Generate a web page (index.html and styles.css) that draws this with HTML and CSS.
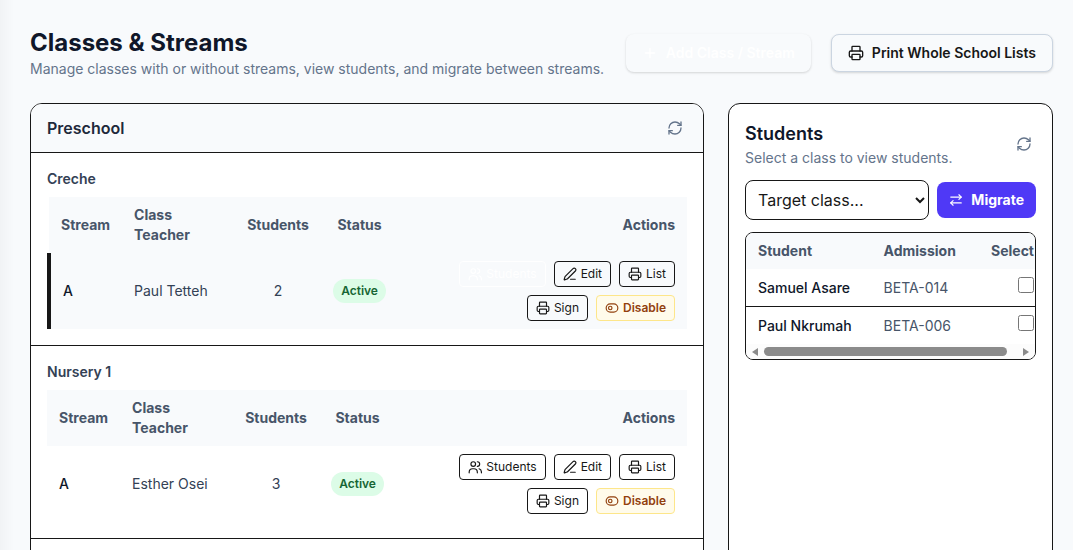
FILE: index.html
```html
<!DOCTYPE html>
<html lang="en">
<head>
<meta charset="utf-8">
<meta name="viewport" content="width=device-width, initial-scale=1">
<title>Classes &amp; Streams</title>
<link rel="stylesheet" href="styles.css">
</head>
<body>
<!-- shared icons -->
<svg class="sprite" aria-hidden="true">
  <symbol id="i-plus" viewBox="0 0 24 24"><path d="M5 12h14M12 5v14"/></symbol>
  <symbol id="i-printer" viewBox="0 0 24 24"><path d="M6 18H4a2 2 0 0 1-2-2v-5a2 2 0 0 1 2-2h16a2 2 0 0 1 2 2v5a2 2 0 0 1-2 2h-2"/><path d="M6 9V3a1 1 0 0 1 1-1h10a1 1 0 0 1 1 1v6"/><rect x="6" y="14" width="12" height="8" rx="1"/></symbol>
  <symbol id="i-refresh" viewBox="0 0 24 24"><path d="M3 12a9 9 0 0 1 9-9 9.75 9.75 0 0 1 6.74 2.74L21 8"/><path d="M21 3v5h-5"/><path d="M21 12a9 9 0 0 1-9 9 9.75 9.75 0 0 1-6.74-2.74L3 16"/><path d="M8 16H3v5"/></symbol>
  <symbol id="i-users" viewBox="0 0 24 24"><path d="M2 22v-1a6 6 0 0 1 6-6h2a6 6 0 0 1 6 6v1"/><circle cx="9" cy="7" r="4"/><path d="M16 3a4 4 0 0 1 0 8"/><path d="M19 15a6 6 0 0 1 4 6v1"/></symbol>
  <symbol id="i-pen" viewBox="0 0 24 24"><path d="M13 21h8"/><path d="M21.174 6.812a1 1 0 0 0-3.986-3.987L3.842 16.174a2 2 0 0 0-.5.83l-1.321 4.352a.5.5 0 0 0 .623.622l4.353-1.32a2 2 0 0 0 .83-.497z"/></symbol>
  <symbol id="i-toggle" viewBox="0 0 24 24"><circle cx="9" cy="12" r="3"/><rect x="2" y="5" width="20" height="14" rx="7"/></symbol>
  <symbol id="i-swap" viewBox="0 0 24 24"><path d="m17 3 4 4-4 4"/><path d="M21 7H3"/><path d="m7 21-4-4 4-4"/><path d="M3 17h18"/></symbol>
</svg>

<main class="page">
  <header class="page-head">
    <div class="page-title">
      <h1>Classes &amp; Streams</h1>
      <p>Manage classes with or without streams, view students, and migrate between streams.</p>
    </div>
    <div class="head-actions">
      <button type="button" class="btn btn-add"><svg class="icon"><use href="#i-plus"/></svg>Add Class / Stream</button>
      <button type="button" class="btn btn-print"><svg class="icon"><use href="#i-printer"/></svg>Print Whole School Lists</button>
    </div>
  </header>

  <div class="layout">
    <section class="card classes">
      <div class="card-head">
        <h2>Preschool</h2>
        <button type="button" class="refresh" aria-label="Refresh classes"><svg class="icon"><use href="#i-refresh"/></svg></button>
      </div>

      <div class="class-block">
        <h3>Creche</h3>
        <table class="streams">
          <thead>
            <tr><th class="col-stream">Stream</th><th class="col-teacher">Class Teacher</th><th class="col-count center">Students</th><th class="col-status center">Status</th><th class="right">Actions</th></tr>
          </thead>
          <tbody>
            <tr class="selected">
              <td class="name">A</td>
              <td>Paul Tetteh</td>
              <td class="center">2</td>
              <td class="center"><span class="badge">Active</span></td>
              <td>
                <div class="actions">
                  <button type="button" class="btn-sm active"><svg class="icon"><use href="#i-users"/></svg>Students</button>
                  <button type="button" class="btn-sm"><svg class="icon"><use href="#i-pen"/></svg>Edit</button>
                  <button type="button" class="btn-sm"><svg class="icon"><use href="#i-printer"/></svg>List</button>
                  <button type="button" class="btn-sm"><svg class="icon"><use href="#i-printer"/></svg>Sign</button>
                  <button type="button" class="btn-sm warn"><svg class="icon"><use href="#i-toggle"/></svg>Disable</button>
                </div>
              </td>
            </tr>
          </tbody>
        </table>
      </div>

      <div class="class-block">
        <h3>Nursery 1</h3>
        <table class="streams">
          <thead>
            <tr><th class="col-stream">Stream</th><th class="col-teacher">Class Teacher</th><th class="col-count center">Students</th><th class="col-status center">Status</th><th class="right">Actions</th></tr>
          </thead>
          <tbody>
            <tr>
              <td class="name">A</td>
              <td>Esther Osei</td>
              <td class="center">3</td>
              <td class="center"><span class="badge">Active</span></td>
              <td>
                <div class="actions">
                  <button type="button" class="btn-sm"><svg class="icon"><use href="#i-users"/></svg>Students</button>
                  <button type="button" class="btn-sm"><svg class="icon"><use href="#i-pen"/></svg>Edit</button>
                  <button type="button" class="btn-sm"><svg class="icon"><use href="#i-printer"/></svg>List</button>
                  <button type="button" class="btn-sm"><svg class="icon"><use href="#i-printer"/></svg>Sign</button>
                  <button type="button" class="btn-sm warn"><svg class="icon"><use href="#i-toggle"/></svg>Disable</button>
                </div>
              </td>
            </tr>
          </tbody>
        </table>
      </div>

      <div class="class-block"></div>
    </section>

    <aside class="card students">
      <div class="students-head">
        <div>
          <h2>Students</h2>
          <p>Select a class to view students.</p>
        </div>
        <button type="button" class="refresh" aria-label="Refresh students"><svg class="icon"><use href="#i-refresh"/></svg></button>
      </div>
      <div class="migrate">
        <select aria-label="Target class">
          <option>Target class...</option>
        </select>
        <button type="button" class="btn-migrate"><svg class="icon"><use href="#i-swap"/></svg>Migrate</button>
      </div>
      <div class="table-box">
        <div class="table-scroll">
          <table class="roster">
            <thead>
              <tr><th>Student</th><th>Admission</th><th class="right">Select</th></tr>
            </thead>
            <tbody>
              <tr>
                <td class="name">Samuel Asare</td>
                <td>BETA-014</td>
                <td class="right"><input type="checkbox" aria-label="Select Samuel Asare"></td>
              </tr>
              <tr>
                <td class="name">Paul Nkrumah</td>
                <td>BETA-006</td>
                <td class="right"><input type="checkbox" aria-label="Select Paul Nkrumah"></td>
              </tr>
            </tbody>
          </table>
        </div>
        <div class="scrollbar" aria-hidden="true">
          <svg class="arrow" viewBox="0 0 6 8"><path d="M6 0v8L0 4z"/></svg>
          <div class="track"><div class="thumb"></div></div>
          <svg class="arrow" viewBox="0 0 6 8"><path d="M0 0v8l6-4z"/></svg>
        </div>
      </div>
    </aside>
  </div>
</main>
</body>
</html>
```
FILE: styles.css
```css
* {
  box-sizing: border-box;
  margin: 0;
  padding: 0;
}
body {
  font-family: Inter, "Liberation Sans", sans-serif;
  font-size: 14px;
  line-height: 20px;
  color: #171717;
  background: linear-gradient(to right, #f1f3f5, #f8fafc 14px);
}
button, select, input {
  font: inherit;
  color: inherit;
}
button {
  cursor: pointer;
}
.sprite {
  display: none;
}
.icon {
  width: 16px;
  height: 16px;
  flex: none;
  fill: none;
  stroke: currentColor;
  stroke-width: 2;
  stroke-linecap: round;
  stroke-linejoin: round;
}
.right {
  text-align: right;
}
.center {
  text-align: center;
}

.page {
  padding: 27px 20px 24px 30px;
}
.page-head {
  display: flex;
  align-items: center;
  justify-content: space-between;
  margin-bottom: 24px;
}
.page-title h1 {
  font-size: 24px;
  line-height: 32px;
  font-weight: 700;
  color: #0f172a;
}
.page-title p {
  color: #64748b;
}
.head-actions {
  display: flex;
  gap: 20px;
}
.btn {
  display: flex;
  align-items: center;
  gap: 8px;
  padding: 8px 16px;
  border: 1px solid #cbd5e1;
  border-radius: 8px;
  background-color: #f8fafc;
  font-weight: 600;
  white-space: nowrap;
  box-shadow: 0 1px 3px rgba(0, 0, 0, 0.1), 0 1px 2px rgba(0, 0, 0, 0.06);
}
.btn-add {
  border: none;
  color: #fff;
}

.layout {
  display: grid;
  grid-template-columns: repeat(3, minmax(0, 1fr));
  gap: 24px;
}
.card {
  border: 1px solid #171717;
  border-radius: 12px;
  background-color: #fff;
  overflow: hidden;
}
.classes {
  grid-column: span 2;
}
.card-head {
  display: flex;
  align-items: center;
  justify-content: space-between;
  padding: 12px 16px;
  background-color: #f8fafc;
}
.card-head h2 {
  font-size: 16px;
  line-height: 24px;
  font-weight: 600;
  color: #1e293b;
}
.refresh {
  display: flex;
  padding: 4px;
  border: none;
  background: none;
  color: #64748b;
}
.class-block {
  padding: 16px;
  border-top: 1px solid #171717;
}
.class-block h3 {
  margin-bottom: 8px;
  font-size: 14px;
  font-weight: 600;
  color: #334155;
}

table {
  width: 100%;
  border-collapse: collapse;
}
th, td {
  padding: 8px 12px;
}
th {
  font-weight: 700;
  color: #475569;
  background-color: #f8fafc;
}
th:not(.right):not(.center) {
  text-align: left;
}
.col-stream {
  width: 73px;
}
.col-teacher {
  width: 113px;
}
.col-count {
  width: 86px;
}
.col-status {
  width: 77px;
}
.streams td {
  color: #334155;
}
.streams .name, .roster .name {
  font-weight: 500;
  color: #0f172a;
}
.streams .selected {
  background-color: #f8fafc;
  border-left: 4px solid #171717;
}
.badge {
  display: inline-block;
  padding: 4px 8px;
  border-radius: 12px;
  background-color: #dcfce7;
  color: #166534;
  font-size: 12px;
  line-height: 16px;
  font-weight: 600;
}
.actions {
  display: flex;
  flex-wrap: wrap;
  justify-content: flex-end;
  gap: 8px;
}
.btn-sm {
  display: flex;
  align-items: center;
  gap: 4px;
  padding: 4px 8px;
  border: 1px solid #171717;
  border-radius: 4px;
  background: none;
  color: #171717;
  font-size: 12px;
  line-height: 16px;
}
.btn-sm .icon {
  width: 14px;
  height: 14px;
}
.btn-sm.active {
  border-color: #fff;
  color: #fff;
}
.btn-sm.warn {
  border-color: #fde68a;
  background-color: #fffbeb;
  color: #92400e;
  font-weight: 600;
}

.students {
  padding: 16px;
}
.students-head {
  display: flex;
  align-items: center;
  justify-content: space-between;
  margin-bottom: 12px;
}
.students-head h2 {
  font-size: 18px;
  line-height: 28px;
  font-weight: 600;
  color: #0f172a;
}
.students-head p {
  color: #64748b;
}
.migrate {
  display: flex;
  align-items: center;
  gap: 8px;
  margin-bottom: 12px;
}
.migrate select {
  flex: 1;
  min-width: 0;
  height: 40px;
  padding: 0 8px;
  border: 1px solid #171717;
  border-radius: 8px;
  background-color: #fff;
  font-size: 16px;
}
.btn-migrate {
  display: flex;
  align-items: center;
  gap: 8px;
  padding: 8px 12px;
  border: none;
  border-radius: 8px;
  background-color: #4f39f6;
  color: #fff;
  font-weight: 700;
}
.btn-migrate .icon {
  width: 14px;
  height: 14px;
}
.table-box {
  border: 1px solid #171717;
  border-radius: 8px;
  overflow: hidden;
}
.table-scroll {
  overflow-x: auto;
  scrollbar-width: none;
}
.roster {
  min-width: 300px;
}
.roster td {
  color: #475569;
}
.roster tbody tr + tr {
  border-top: 1px solid #171717;
}
.roster input {
  width: 16px;
  height: 16px;
}
.scrollbar {
  display: flex;
  align-items: center;
  gap: 6px;
  height: 15px;
  padding: 0 6px;
  background-color: #fcfcfc;
}
.arrow {
  width: 6px;
  height: 8px;
  fill: #8b8b8b;
}
.track {
  flex: 1;
}
.thumb {
  width: 96%;
  height: 9px;
  border-radius: 5px;
  background-color: #8b8b8b;
}
```
